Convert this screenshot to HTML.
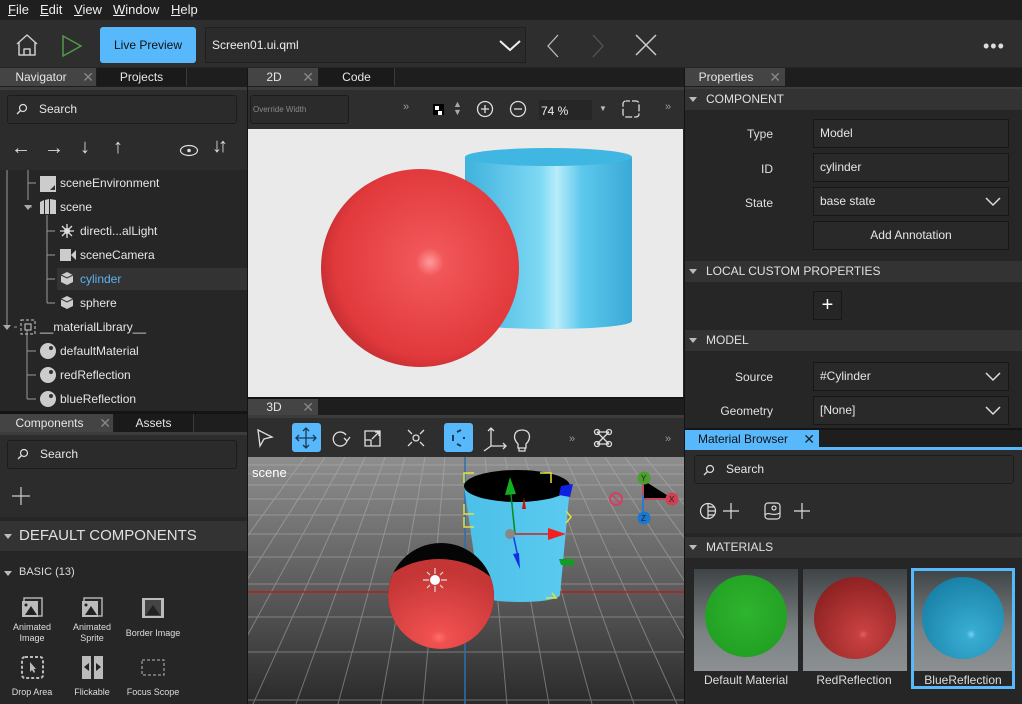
<!DOCTYPE html>
<html><head><meta charset="utf-8"><style>
*{box-sizing:border-box;margin:0;padding:0}
body{width:1022px;height:704px;overflow:hidden;background:#262626;font-family:"Liberation Sans",sans-serif;color:#dcdcdc;font-size:12px;position:relative}
.a{position:absolute}
.menu{left:0;top:0;width:1022px;height:20px;background:#1f1f1f}
.menu span{position:absolute;top:2px;font-size:13px;color:#eee}
.tb{left:0;top:20px;width:1022px;height:47px;background:#2e2e2e}
.tabbar{height:19px;background:#1e1e1e}
.tab{position:absolute;top:0;height:18px;font-size:12px;line-height:18px;text-align:center;color:#e6e6e6}
.tab.on{background:#444}
.tab.off{background:#1a1a1a;border-right:1px solid #3a3a3a}
.strip{height:3px;background:#3c3c3c}
.inp{position:absolute;border:1px solid #1c1c1c;background:#2b2b2b;border-radius:3px;color:#e6e6e6;font-size:12px}
.pl{position:absolute;font-size:12px;color:#e0e0e0;text-align:right;width:60px}
.pf{position:absolute;left:813px;width:196px;height:29px;border:1px solid #171717;background:#292929;font-size:12px;line-height:27px;padding-left:6px;color:#e6e6e6}
.sec{position:absolute;left:685px;width:337px;height:21px;background:#333;font-size:12px;line-height:21px;padding-left:21px;color:#e0e0e0}
.tri{position:absolute;left:4px;top:8px;width:0;height:0;border-left:4px solid transparent;border-right:4px solid transparent;border-top:5px solid #bbb}
.tr{position:absolute;font-size:12px;color:#e6e6e6}
.lbl{position:absolute;font-size:9px;color:#ddd;text-align:center;width:50px;line-height:11px}
</style></head><body>

<div class="a menu">
<span style="left:8px"><u>F</u>ile</span><span style="left:40px"><u>E</u>dit</span><span style="left:74px"><u>V</u>iew</span><span style="left:113px"><u>W</u>indow</span><span style="left:171px"><u>H</u>elp</span>
</div>

<div class="a tb"></div>
<svg class="a" style="left:14px;top:31px" width="26" height="28" viewBox="0 0 26 28"><path d="M3 13 L13 4 L23 13 M5 11 V24 H21 V11 M10 24 V18 H16 V24" fill="none" stroke="#ccc" stroke-width="1.5" stroke-linejoin="round"/></svg>
<svg class="a" style="left:60px;top:34px" width="24" height="24"><path d="M3 2 L21 12 L3 22 Z" fill="none" stroke="#4f9a46" stroke-width="1.5"/></svg>
<div class="a" style="left:100px;top:27px;width:96px;height:36px;background:#57b9fc;border-radius:3px;color:#111;font-size:12px;line-height:36px;text-align:center">Live Preview</div>
<div class="a" style="left:205px;top:27px;width:321px;height:36px;border:1px solid #1f1f1f;background:#2b2b2b;font-size:12px;line-height:34px;padding-left:6px;color:#eee">Screen01.ui.qml</div>
<svg class="a" style="left:498px;top:37px" width="24" height="16"><path d="M2 4 L12 13 L22 4" fill="none" stroke="#eee" stroke-width="2"/></svg>
<svg class="a" style="left:545px;top:33px" width="16" height="26"><path d="M13 2 L3 13 L13 24" fill="none" stroke="#bbb" stroke-width="1.3"/></svg>
<svg class="a" style="left:590px;top:33px" width="16" height="26"><path d="M3 2 L13 13 L3 24" fill="none" stroke="#555" stroke-width="1.3"/></svg>
<svg class="a" style="left:634px;top:33px" width="24" height="24"><path d="M2 2 L22 22 M22 2 L2 22" stroke="#ccc" stroke-width="1.5"/></svg>
<div class="a" style="left:983px;top:36px;font-size:18px;color:#ddd;letter-spacing:1px">•••</div>

<!-- Left panel -->
<div class="a tabbar" style="left:0;top:68px;width:247px">
<div class="tab on" style="left:0;width:96px;padding-right:14px">Navigator <span style="position:absolute;right:2px;color:#888;font-size:14px">✕</span></div>
<div class="tab off" style="left:97px;width:90px">Projects</div>
</div>
<div class="a strip" style="left:0;top:87px;width:247px"></div>
<div class="a" style="left:0;top:90px;width:247px;height:80px;background:#2c2c2c"></div>
<div class="inp" style="left:7px;top:95px;width:230px;height:29px;line-height:27px;padding-left:31px">Search</div>
<svg class="a" style="left:16px;top:103px" width="12" height="12"><circle cx="7" cy="5" r="3.5" fill="none" stroke="#ddd" stroke-width="1.2"/><path d="M4.5 7.5 L1 11" stroke="#ddd" stroke-width="1.3"/></svg>
<div class="a" style="left:11px;top:137px;font-size:20px;color:#ddd">←</div>
<div class="a" style="left:44px;top:137px;font-size:20px;color:#ddd">→</div>
<div class="a" style="left:80px;top:136px;font-size:20px;color:#ddd">↓</div>
<div class="a" style="left:113px;top:136px;font-size:20px;color:#ddd">↑</div>
<svg class="a" style="left:179px;top:144px" width="20" height="13"><ellipse cx="10" cy="6.5" rx="8.5" ry="5" fill="none" stroke="#ddd" stroke-width="1.2"/><circle cx="10" cy="6.5" r="1.8" fill="#ddd"/></svg>
<div class="a" style="left:212px;top:135px;font-size:20px;color:#ddd;letter-spacing:-4px">↓↑</div>
<div class="a" style="left:0;top:170px;width:247px;height:240px;background:#262626"></div>
<div class="a" style="left:57px;top:268px;width:190px;height:22px;background:#333"></div>
<svg class="a" style="left:0;top:170px" width="80" height="240">
<g stroke="#999" fill="none" stroke-width="1">
<path d="M7 0 V157 M28 0 V13 H36 M28 0 V30 M28 37 H32 M14 157 H17"/>
<path d="M47 45 V133 M47 61 H55 M47 85 H55 M47 109 H55 M47 133 H55"/>
<path d="M27 160 V229 M27 181 H36 M27 205 H36 M27 229 H36"/>
</g>
<path d="M24 35 L32 35 L28 40 Z" fill="#aaa"/><path d="M3 155 L11 155 L7 160 Z" fill="#aaa"/>
<path d="M40 6 H56 V22 H40Z" fill="#ccc"/><path d="M50 20 L55 15 V20Z" fill="#333"/>
<path d="M40 32 L44 30 V44 L40 44Z M45 30 L49 29 V44 H45Z M50 29 L56 30 V44 H50Z" fill="#ccc"/>
<g stroke="#ddd" stroke-width="1.3"><path d="M67 54 V68 M60 61 H74 M62 56 L72 66 M72 56 L62 66"/></g><circle cx="67" cy="61" r="3" fill="#ddd"/>
<path d="M60 79 H71 V91 H60Z M71 85 L76 80 V90Z" fill="#ccc"/>
<path d="M67 102 L73 105 L73 112 L67 115 L61 112 L61 105Z" fill="#ccc"/><path d="M61 105 L67 108 L73 105" stroke="#333" fill="none"/>
<path d="M67 126 L73 129 L73 136 L67 139 L61 136 L61 129Z" fill="#ccc"/><path d="M61 129 L67 132 L73 129" stroke="#333" fill="none"/>
<rect x="21" y="150" width="14" height="14" fill="none" stroke="#ccc" stroke-dasharray="3 2"/><rect x="25" y="154" width="6" height="6" fill="none" stroke="#ccc"/>
<circle cx="48" cy="181" r="8" fill="#ccc"/><circle cx="51" cy="178" r="2" fill="#333"/>
<circle cx="48" cy="205" r="8" fill="#ccc"/><circle cx="51" cy="202" r="2" fill="#333"/>
<circle cx="48" cy="229" r="8" fill="#ccc"/><circle cx="51" cy="226" r="2" fill="#333"/>
</svg>
<div class="tr" style="left:60px;top:176px">sceneEnvironment</div>
<div class="tr" style="left:60px;top:200px">scene</div>
<div class="tr" style="left:80px;top:224px">directi...alLight</div>
<div class="tr" style="left:80px;top:248px">sceneCamera</div>
<div class="tr" style="left:80px;top:272px;color:#5bb3f0">cylinder</div>
<div class="tr" style="left:80px;top:296px">sphere</div>
<div class="tr" style="left:40px;top:320px">__materialLibrary__</div>
<div class="tr" style="left:60px;top:344px">defaultMaterial</div>
<div class="tr" style="left:60px;top:368px">redReflection</div>
<div class="tr" style="left:60px;top:392px">blueReflection</div>

<div class="a" style="left:0;top:411px;width:247px;height:3px;background:#141414"></div>
<div class="a tabbar" style="left:0;top:414px;width:247px">
<div class="tab on" style="left:0;width:113px;padding-right:14px">Components <span style="position:absolute;right:2px;color:#888;font-size:14px">✕</span></div>
<div class="tab off" style="left:114px;width:80px">Assets</div>
</div>
<div class="a strip" style="left:0;top:432px;width:247px"></div>
<div class="a" style="left:0;top:435px;width:247px;height:82px;background:#2c2c2c"></div>
<div class="inp" style="left:7px;top:440px;width:230px;height:29px;line-height:27px;padding-left:32px">Search</div>
<svg class="a" style="left:17px;top:448px" width="12" height="12"><circle cx="7" cy="5" r="3.5" fill="none" stroke="#ddd" stroke-width="1.2"/><path d="M4.5 7.5 L1 11" stroke="#ddd" stroke-width="1.3"/></svg>
<svg class="a" style="left:12px;top:487px" width="18" height="18"><path d="M9 0 V18 M0 9 H18" stroke="#ccc" stroke-width="1.2"/></svg>
<div class="a" style="left:0;top:521px;width:247px;height:30px;background:#333;font-size:15px;line-height:30px;padding-left:19px;color:#e0e0e0">DEFAULT COMPONENTS<div class="tri" style="top:13px"></div></div>
<div class="a" style="left:0;top:566px;font-size:11px;padding-left:19px;color:#ddd">BASIC (13)<div class="tri" style="top:5px"></div></div>
<svg class="a" style="left:0;top:597px" width="247" height="90" fill="#bbb">
<rect x="24" y="1" width="18" height="18" fill="none" stroke="#bbb" stroke-width="1.4"/><rect x="22" y="4" width="16" height="16"/><path d="M25 18 L31 9 L37 18Z" fill="#222"/><circle cx="26" cy="8" r="1.5" fill="#222"/>
<rect x="84" y="1" width="18" height="18" fill="none" stroke="#bbb" stroke-width="1.4"/><rect x="82" y="4" width="16" height="16"/><path d="M85 18 L91 9 L97 18Z" fill="#222"/><circle cx="86" cy="8" r="1.5" fill="#222"/>
<rect x="142" y="1" width="22" height="20"/><rect x="145" y="3" width="16" height="16" fill="#444"/><path d="M146 18 L153 8 L160 18Z" fill="#222"/>
<rect x="22" y="60" width="21" height="21" fill="none" stroke="#bbb" stroke-width="2" stroke-dasharray="3 2" rx="3"/><path d="M30 65 V75 L32 73 L34 76 L35 75 L34 72 L36 72Z"/>
<path d="M82 59 H91 V82 H82Z M94 59 H103 V82 H94Z"/><path d="M84 70 L89 66 V74Z M101 70 L96 66 V74Z" fill="#222"/>
<rect x="142" y="63" width="22" height="15" fill="none" stroke="#bbb" stroke-dasharray="3 2"/>
</svg>
<div class="lbl" style="left:7px;top:622px">Animated<br>Image</div>
<div class="lbl" style="left:67px;top:622px">Animated<br>Sprite</div>
<div class="lbl" style="left:124px;top:628px;width:58px">Border Image</div>
<div class="lbl" style="left:7px;top:687px">Drop Area</div>
<div class="lbl" style="left:67px;top:687px">Flickable</div>
<div class="lbl" style="left:124px;top:687px;width:58px">Focus Scope</div>

<!-- Center -->
<div class="a" style="left:247px;top:68px;width:1px;height:636px;background:#141414"></div>
<div class="a tabbar" style="left:248px;top:68px;width:436px">
<div class="tab on" style="left:0;width:70px;padding-right:18px">2D <span style="position:absolute;right:4px;color:#888;font-size:14px">✕</span></div>
<div class="tab off" style="left:71px;width:76px">Code</div>
</div>
<div class="a strip" style="left:248px;top:87px;width:436px"></div>
<div class="a" style="left:248px;top:90px;width:436px;height:39px;background:#2e2e2e"></div>
<div class="inp" style="left:250px;top:95px;width:99px;height:29px;line-height:27px;padding-left:2px;font-size:8px;color:#888">Override Width</div>
<div class="a" style="left:403px;top:101px;color:#999;font-size:11px">»</div>
<div class="a" style="left:433px;top:104px;width:11px;height:11px;background:#000"><div style="margin:2px;width:4px;height:4px;background:#fff"></div><div style="margin-left:5px;margin-top:-1px;width:4px;height:4px;background:#fff"></div></div>
<div class="a" style="left:453px;top:100px;color:#aaa;font-size:9px;line-height:8px">▲<br>▼</div>
<svg class="a" style="left:476px;top:100px" width="60" height="18"><g fill="none" stroke="#ddd" stroke-width="1.3"><circle cx="9" cy="9" r="7.5"/><path d="M5 9 H13 M9 5 V13"/><circle cx="42" cy="9" r="7.5"/><path d="M38 9 H46"/></g></svg>
<div class="a" style="left:539px;top:100px;width:53px;height:20px;background:#262626;font-size:12px;line-height:22px;padding-left:2px;color:#eee">74 %</div>
<div class="a" style="left:599px;top:104px;color:#bbb;font-size:8px">▼</div>
<svg class="a" style="left:622px;top:100px" width="18" height="18"><rect x="1" y="1" width="16" height="16" rx="3" fill="none" stroke="#ddd" stroke-width="1.3" stroke-dasharray="7 2" stroke-dashoffset="3"/></svg>
<div class="a" style="left:665px;top:101px;color:#999;font-size:11px">»</div>
<svg class="a" style="left:248px;top:129px" width="435" height="268">
<defs>
<linearGradient id="cyl" x1="0" x2="1"><stop offset="0" stop-color="#3fb2dc"/><stop offset=".45" stop-color="#7ed8f4"/><stop offset=".55" stop-color="#b8ecfb"/><stop offset=".7" stop-color="#5cc8ec"/><stop offset="1" stop-color="#3aa9d6"/></linearGradient>
<radialGradient id="sph" cx=".55" cy=".47" r=".6"><stop offset="0" stop-color="#ff9a9c"/><stop offset=".12" stop-color="#f15658"/><stop offset=".8" stop-color="#e1393c"/><stop offset="1" stop-color="#b82a2e"/></radialGradient>
</defs>
<rect width="435" height="268" fill="#eaeaea"/>
<path d="M217 28 V192 A83 8 0 0 0 384 192 V28Z" fill="url(#cyl)"/>
<ellipse cx="300.5" cy="28" rx="83.5" ry="9" fill="#40b7e2"/>
<circle cx="172" cy="139" r="99" fill="url(#sph)"/>
</svg>
<div class="a" style="left:248px;top:397px;width:436px;height:2px;background:#141414"></div>
<div class="a tabbar" style="left:248px;top:399px;width:436px;height:16px">
<div class="tab on" style="left:0;width:70px;padding-right:18px;height:16px;line-height:16px">3D <span style="position:absolute;right:4px;color:#888;font-size:14px">✕</span></div>
</div>
<div class="a" style="left:248px;top:415px;width:436px;height:3px;background:#3c3c3c"></div>
<div class="a" style="left:248px;top:418px;width:436px;height:39px;background:#2e2e2e"></div>
<div class="a" style="left:292px;top:423px;width:29px;height:29px;background:#57b9fc;border-radius:3px"></div>
<div class="a" style="left:444px;top:423px;width:29px;height:29px;background:#57b9fc;border-radius:3px"></div>
<svg class="a" style="left:248px;top:418px" width="436" height="39"><g fill="none" stroke="#ddd" stroke-width="1.3">
<path d="M10 12 L24 19 L16 21 L12 28Z"/>
<path d="M58 10 V30 M48 20 H68 M55 13 L58 10 L61 13 M55 27 L58 30 L61 27 M51 17 L48 20 L51 23 M65 17 L68 20 L65 23" stroke="#1a3a55"/>
<path d="M98 17 A7 7 0 1 0 99 23 M96 20 L99 23 L102 19"/>
<path d="M117 13 H132 V28 H117Z M117 22 H123 V28 M124 21 L131 14 M127 14 H131 V18"/>
<circle cx="168" cy="20" r="3"/><path d="M160 12 L164 16 M176 12 L172 16 M160 28 L164 24 M176 28 L172 24"/>
<path d="M205 17 V23 M209 14 L213 12 M209 26 L213 28 M215 20 H217" stroke="#1a3a55" stroke-width="2"/>
<path d="M243 10 V28 H258 M243 28 L236 33 M240 13 L243 10 L246 13 M255 25 L258 28 L255 31"/>
<path d="M270 26 C264 20 266 12 274 12 C282 12 284 20 278 26 V30 H270Z M271 30 V33 H277 V30"/>
<path d="M349 14 L355 20 L349 26 M361 14 L355 20 L361 26 M349 14 H361 M349 26 H361" /><circle cx="349" cy="14" r="2.5"/><circle cx="361" cy="14" r="2.5"/><circle cx="349" cy="26" r="2.5"/><circle cx="361" cy="26" r="2.5"/>
</g><text x="321" y="24" fill="#999" font-size="11" font-family="Liberation Sans">»</text><text x="417" y="24" fill="#999" font-size="11" font-family="Liberation Sans">»</text></svg>

<svg class="a" style="left:248px;top:457px" width="436" height="247">
<defs>
<linearGradient id="bg3" x1="0" y1="0" x2="0" y2="1"><stop offset="0" stop-color="#8e8e8e"/><stop offset=".55" stop-color="#5a5a5a"/><stop offset="1" stop-color="#2a2a2a"/></linearGradient>
<linearGradient id="c3" x1="0" x2="1"><stop offset="0" stop-color="#4cc0e8"/><stop offset="1" stop-color="#5bcaf0"/></linearGradient>
<radialGradient id="s3" cx=".5" cy=".7" r=".6"><stop offset="0" stop-color="#ff6d6d"/><stop offset=".1" stop-color="#f05050"/><stop offset="1" stop-color="#c43535"/></radialGradient>
<clipPath id="sc"><circle cx="193" cy="139" r="53"/></clipPath>
</defs>
<rect width="436" height="247" fill="url(#bg3)"/>
<g stroke="#b5b5b5" stroke-width="1" opacity=".5">
<path d="M0 8 H436 M0 17 H436 M0 28 H436 M0 42 H436 M0 58 H436 M0 77 H436 M0 100 H436 M0 127 H436 M0 160 H436 M0 195 H436 M0 243 H436"/>
<path d="M217 0 L217 247 M197 0 L175 247 M177 0 L133 247 M157 0 L90 247 M137 0 L48 247 M117 0 L5 247 M97 0 L-38 247 M77 0 L-80 247 M57 0 L-123 247 M237 0 L259 247 M257 0 L301 247 M277 0 L344 247 M297 0 L386 247 M317 0 L429 247 M337 0 L472 247 M357 0 L515 247 M377 0 L558 247 M397 0 L600 247"/>
</g>
<path d="M0 135 H436" stroke="#b52020" stroke-width="1.5"/>
<path d="M217 0 V247" stroke="#2a70b0" stroke-width="1.5"/>
<path d="M216 29 L232 138 A40 7 0 0 0 312 138 L322 29Z" fill="url(#c3)"/>
<ellipse cx="269" cy="29" rx="53" ry="16" fill="#000"/>
<circle cx="193" cy="139" r="53" fill="#050505"/>
<ellipse cx="191" cy="158" rx="70" ry="56" fill="url(#s3)" clip-path="url(#sc)"/>
<g stroke="#ddd" stroke-width="1.2"><path d="M187 111 V117 M187 129 V135 M175 123 H181 M193 123 H199 M179 115 L182 118 M192 128 L195 131 M195 115 L192 118 M182 128 L179 131"/></g>
<circle cx="187" cy="123" r="5" fill="#fff"/>
<g stroke="#e5e03a" stroke-width="1.5" fill="none"><path d="M216 26 V16 H226 M216 47 V57 H226 M216 60 V70 H226 M292 16 H303 V26 M318 54 L323 60 L318 66 M298 141 H308 L304 136"/></g>
<path d="M267 77 L262 28" stroke="#0a8a1a" stroke-width="1.5"/><path d="M262 20 L257 38 L268 37Z" fill="#10b020"/>
<path d="M263 77 L315 77" stroke="#d02020" stroke-width="1.5"/><path d="M318 77 L300 71 L300 83Z" fill="#f02020"/>
<path d="M265 77 L270 100" stroke="#1a3ae0" stroke-width="1.5"/><path d="M272 112 L265 97 L271 96Z" fill="#1030e0"/>
<path d="M276 40 L278 52 L274 52Z" fill="#d01010"/>
<circle cx="262" cy="77" r="5" fill="#888"/>
<path d="M313 29 L325 27 L322 40 L311 38Z" fill="#1020e0"/>
<path d="M311 102 L325 102 L327 108 L313 108Z" fill="#10a020"/>
<path d="M395 23 V42 H425" stroke="#c34a5a" stroke-width="2"/><path d="M395 38 V59" stroke="#2a7ad0" stroke-width="2"/>
<circle cx="368" cy="42" r="6" fill="none" stroke="#d04060" stroke-width="2"/><path d="M364 38 L372 46" stroke="#d04060" stroke-width="1.5"/>
<circle cx="396" cy="21" r="6.5" fill="#4aa02a"/><text x="393" y="24" font-size="8" fill="#222" font-family="Liberation Sans">Y</text>
<circle cx="424" cy="42" r="6.5" fill="#d04050"/><text x="421" y="45" font-size="8" fill="#222" font-family="Liberation Sans">X</text>
<circle cx="396" cy="61" r="6.5" fill="#1a78d0"/><text x="393" y="64" font-size="8" fill="#222" font-family="Liberation Sans">Z</text>
<text x="4" y="20" font-size="13" fill="#fff" font-family="Liberation Sans">scene</text>
</svg>

<!-- Right -->
<div class="a" style="left:684px;top:68px;width:1px;height:636px;background:#141414"></div>
<div class="a tabbar" style="left:685px;top:68px;width:337px">
<div class="tab on" style="left:0;width:100px;padding-right:18px">Properties <span style="position:absolute;right:4px;color:#888;font-size:14px">✕</span></div>
</div>
<div class="a strip" style="left:685px;top:87px;width:337px"></div>
<div class="sec" style="top:89px">COMPONENT<div class="tri"></div></div>
<div class="pl" style="left:713px;top:127px">Type</div>
<div class="pl" style="left:713px;top:162px">ID</div>
<div class="pl" style="left:713px;top:196px">State</div>
<div class="pf" style="top:119px">Model</div>
<div class="pf" style="top:153px">cylinder</div>
<div class="pf" style="top:187px">base state</div>
<div class="pf" style="top:221px;text-align:center;padding:0">Add Annotation</div>
<div class="sec" style="top:261px">LOCAL CUSTOM PROPERTIES<div class="tri"></div></div>
<div class="a" style="left:813px;top:291px;width:29px;height:29px;border:1px solid #171717;color:#fff;font-size:20px;text-align:center;line-height:26px">+</div>
<div class="sec" style="top:330px">MODEL<div class="tri"></div></div>
<div class="pl" style="left:713px;top:370px">Source</div>
<div class="pl" style="left:713px;top:404px">Geometry</div>
<div class="pf" style="top:362px">#Cylinder</div>
<div class="pf" style="top:396px">[None]</div>
<svg class="a" style="left:985px;top:197px" width="16" height="10"><path d="M1 1 L8 8 L15 1" fill="none" stroke="#ddd" stroke-width="1.5"/></svg>
<svg class="a" style="left:985px;top:372px" width="16" height="10"><path d="M1 1 L8 8 L15 1" fill="none" stroke="#ddd" stroke-width="1.5"/></svg>
<svg class="a" style="left:985px;top:406px" width="16" height="10"><path d="M1 1 L8 8 L15 1" fill="none" stroke="#ddd" stroke-width="1.5"/></svg>

<div class="a" style="left:685px;top:428px;width:337px;height:2px;background:#141414"></div>
<div class="a tabbar" style="left:685px;top:430px;width:337px;height:18px">
<div class="tab" style="left:0;width:134px;padding-right:18px;background:#57b9fc;color:#111;height:18px">Material Browser <span style="position:absolute;right:4px;font-size:14px;color:#222">✕</span></div>
</div>
<div class="a" style="left:685px;top:447px;width:337px;height:3px;background:#57b9fc"></div>
<div class="a" style="left:685px;top:450px;width:337px;height:83px;background:#2c2c2c"></div>
<div class="inp" style="left:694px;top:455px;width:320px;height:29px;line-height:27px;padding-left:31px">Search</div>
<svg class="a" style="left:703px;top:464px" width="12" height="12"><circle cx="7" cy="5" r="3.5" fill="none" stroke="#ddd" stroke-width="1.2"/><path d="M4.5 7.5 L1 11" stroke="#ddd" stroke-width="1.3"/></svg>
<svg class="a" style="left:698px;top:500px" width="115" height="22"><g fill="none" stroke="#ddd" stroke-width="1.2">
<circle cx="10" cy="11" r="7.5"/><path d="M10 3.5 V18.5 M10 7 H16 M10 11 H17.5 M10 15 H16"/>
<path d="M33 3 V19 M25 11 H41"/>
<rect x="67" y="3" width="15" height="16" rx="3"/><circle cx="76" cy="8" r="2"/><path d="M67 15 C71 11 74 17 82 13"/>
<path d="M104 3 V19 M96 11 H112"/></g></svg>
<div class="sec" style="top:537px">MATERIALS<div class="tri"></div></div>
<div class="a" style="left:685px;top:558px;width:337px;height:146px;background:#262626"></div>
<svg class="a" style="left:685px;top:558px" width="337" height="146">
<defs>
<linearGradient id="tb" x1="0" y1="0" x2="0" y2="1"><stop offset="0" stop-color="#3e4446"/><stop offset=".6" stop-color="#7b8183"/><stop offset="1" stop-color="#8c9092"/></linearGradient>
<radialGradient id="g1" cx=".5" cy=".45" r=".55"><stop offset="0" stop-color="#2fb52f"/><stop offset="1" stop-color="#22a022"/></radialGradient>
<radialGradient id="r1" cx=".6" cy=".7" r=".7"><stop offset="0" stop-color="#e06060"/><stop offset=".08" stop-color="#c84040"/><stop offset="1" stop-color="#8e2222"/></radialGradient>
<radialGradient id="b1" cx=".6" cy=".7" r=".7"><stop offset="0" stop-color="#7ad2ef"/><stop offset=".08" stop-color="#38acd2"/><stop offset="1" stop-color="#1a82a8"/></radialGradient>
</defs>
<rect x="9" y="11" width="104" height="102" fill="url(#tb)"/><circle cx="61" cy="58" r="41" fill="url(#g1)"/>
<rect x="118" y="11" width="104" height="102" fill="url(#tb)"/><circle cx="170" cy="60" r="41" fill="url(#r1)"/>
<rect x="228" y="11" width="100" height="102" fill="url(#tb)"/><circle cx="278" cy="60" r="41" fill="url(#b1)"/>
<rect x="227.5" y="11.5" width="101" height="118" fill="none" stroke="#57b9fc" stroke-width="3"/>
<text x="61" y="126" fill="#ddd" font-size="12" text-anchor="middle" font-family="Liberation Sans">Default Material</text>
<text x="169" y="126" fill="#ddd" font-size="12" text-anchor="middle" font-family="Liberation Sans">RedReflection</text>
<text x="278" y="126" fill="#ddd" font-size="12" text-anchor="middle" font-family="Liberation Sans">BlueReflection</text>
</svg>
</body></html>
